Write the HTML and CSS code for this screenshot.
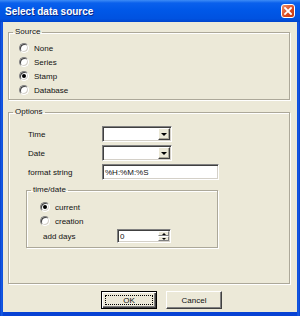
FILE: index.html
```html
<!DOCTYPE html>
<html lang="en">
<head>
    <meta charset="UTF-8">
    <title>Select data source</title>
    <link rel="stylesheet" href="styles.css">
</head>
<body>
    <div class="window">
        <div class="titlebar">
            <span class="title">Select data source</span>
            <span class="close">
                <svg width="8" height="8" viewBox="0 0 8 8">
                    <path d="M1 1L7 7M7 1L1 7" stroke="#fff" stroke-width="1.8" stroke-linecap="square"/>
                </svg>
            </span>
        </div>
        <div class="frame">
            <div class="client">
                <fieldset class="group source">
                    <legend>Source</legend>
                    <div class="radio-list">
                        <div class="option"><span class="radio"></span>None</div>
                        <div class="option"><span class="radio"></span>Series</div>
                        <div class="option"><span class="radio checked"></span>Stamp</div>
                        <div class="option"><span class="radio"></span>Database</div>
                    </div>
                </fieldset>

                <fieldset class="group options">
                    <legend>Options</legend>
                    <div class="form-grid">
                        <label>Time</label>
                        <div class="combo"><span class="drop"></span></div>

                        <label>Date</label>
                        <div class="combo"><span class="drop"></span></div>

                        <label>format string</label>
                        <div class="textbox wide">%H:%M:%S</div>

                        <fieldset class="group timedate">
                            <legend>time/date</legend>
                            <div class="timedate-body">
                                <div class="option"><span class="radio checked"></span>current</div>
                                <div class="option"><span class="radio"></span>creation</div>
                                <div class="days-row">
                                    <label>add days</label>
                                    <div class="spin">
                                        <span class="spin-value">0</span>
                                        <span class="spin-buttons">
                                            <span class="spin-btn up"></span>
                                            <span class="spin-btn down"></span>
                                        </span>
                                    </div>
                                </div>
                            </div>
                        </fieldset>
                    </div>
                </fieldset>

                <div class="buttons">
                    <button class="btn default"><span class="focus">OK</span></button>
                    <button class="btn">Cancel</button>
                </div>
            </div>
        </div>
    </div>
</body>
</html>
```

FILE: styles.css
```css
body {
    margin: 0;
    font-family: "Liberation Sans", Arial, sans-serif;
    font-size: 8px;
    color: #111;
}

.window {
    width: 300px;
    height: 316px;
    display: flex;
    flex-direction: column;
    background: #0842d4;
}

.titlebar {
    height: 22px;
    display: flex;
    align-items: center;
    padding: 0 5px;
    background: linear-gradient(#3d8cf6 0, #0a60ec 3px, #0058e8 45%, #0052e0 85%, #0044cc 100%);
}

.titlebar .title {
    color: #fff;
    font-weight: bold;
    font-size: 10px;
    text-shadow: 1px 1px 0 #0a2a8a;
}

.titlebar .close {
    margin-left: auto;
    width: 14px;
    height: 14px;
    box-sizing: border-box;
    border: 1px solid #fff;
    border-radius: 3px;
    background: linear-gradient(135deg, #f0906a, #d8481f 60%, #c23a14);
    display: flex;
    align-items: center;
    justify-content: center;
}

.frame {
    flex: 1;
    display: flex;
    padding: 0 3px 4px 3px;
    background: linear-gradient(90deg, #0a3fc8 0, #1660ea 2px, #0842d4 3px, #0842d4 297px, #1660ea 298px, #0a3fc8 300px);
}

.client {
    flex: 1;
    background: #ece9d8;
    padding: 0 7px 0 5px;
    display: flex;
    flex-direction: column;
}

.group {
    margin: 0;
    padding: 0;
    border: 1px solid #aca899;
    box-shadow: 1px 1px 0 #fff, inset 1px 1px 0 #fff;
    min-width: 0;
}

.group legend {
    padding: 0 2px;
    margin-left: 4px;
    line-height: 10px;
}

.source {
    margin-top: 5px;
}

.radio-list {
    padding: 4px 0 2px 10px;
}

.option {
    height: 14px;
    display: flex;
    align-items: center;
}

.radio {
    width: 10px;
    height: 10px;
    box-sizing: border-box;
    border-radius: 50%;
    background: #fff;
    border: 1px solid;
    border-color: #808080 #fff #fff #808080;
    box-shadow: inset 1px 1px 0 #404040, inset -1px -1px 0 #d4d0c8;
    margin-right: 5px;
    display: flex;
    align-items: center;
    justify-content: center;
}

.radio.checked::after {
    content: "";
    width: 4px;
    height: 4px;
    border-radius: 50%;
    background: #000;
}

.options {
    margin-top: 7px;
}

.form-grid {
    display: grid;
    grid-template-columns: 74px auto;
    grid-template-rows: 16px 16px 16px auto;
    row-gap: 3px;
    align-items: center;
    padding: 9px 0 35px 19px;
}

.combo,
.textbox,
.spin {
    height: 16px;
    box-sizing: border-box;
    background: #fff;
    border: 1px solid;
    border-color: #808080 #fff #fff #808080;
    box-shadow: inset 1px 1px 0 #404040, inset -1px -1px 0 #d4d0c8;
}

.combo {
    width: 70px;
    display: flex;
    justify-content: flex-end;
    padding: 1px;
}

.drop {
    width: 12px;
    box-sizing: border-box;
    background: #ece9d8;
    border: 1px solid;
    border-color: #fff #404040 #404040 #fff;
    box-shadow: inset -1px -1px 0 #aca899;
    display: flex;
    align-items: center;
    justify-content: center;
}

.drop::after {
    content: "";
    border-left: 3px solid transparent;
    border-right: 3px solid transparent;
    border-top: 3px solid #000;
}

.textbox {
    display: flex;
    align-items: center;
    padding-left: 2px;
}

.textbox.wide {
    width: 117px;
}

.timedate {
    grid-column: 1 / -1;
    align-self: start;
    width: 192px;
    box-sizing: border-box;
    margin: 2px 0 0 -2px;
}

.timedate-body {
    padding: 5px 0 4px 13px;
}

.days-row {
    display: flex;
    align-items: center;
    margin-top: 1px;
}

.days-row label {
    width: 74px;
    padding-left: 3px;
}

.spin {
    width: 54px;
    height: 14px;
    display: flex;
    align-items: center;
    padding: 1px;
}

.spin-value {
    flex: 1;
    padding-left: 1px;
}

.spin-buttons {
    width: 11px;
    align-self: stretch;
    display: flex;
    flex-direction: column;
}

.spin-btn {
    flex: 1;
    box-sizing: border-box;
    background: #ece9d8;
    border: 1px solid;
    border-color: #fff #808080 #808080 #fff;
    display: flex;
    align-items: center;
    justify-content: center;
}

.spin-btn.up::after {
    content: "";
    border-left: 2px solid transparent;
    border-right: 2px solid transparent;
    border-bottom: 2px solid #000;
}

.spin-btn.down::after {
    content: "";
    border-left: 2px solid transparent;
    border-right: 2px solid transparent;
    border-top: 2px solid #000;
}

.buttons {
    display: flex;
    gap: 9px;
    margin-top: 7px;
    padding-left: 93px;
}

.btn {
    width: 56px;
    height: 18px;
    box-sizing: border-box;
    padding: 0;
    font-family: inherit;
    font-size: 8px;
    color: #111;
    background: #ece9d8;
    border: 1px solid;
    border-color: #fff #404040 #404040 #fff;
    box-shadow: inset -1px -1px 0 #808080;
}

.btn.default {
    border: 1px solid #000;
    box-shadow: inset 1px 1px 0 #fff, inset -1px -1px 0 #404040, inset -2px -2px 0 #808080;
    display: flex;
    padding: 3px;
}

.btn .focus {
    flex: 1;
    border: 1px dotted #000;
    display: flex;
    align-items: center;
    justify-content: center;
}
```
